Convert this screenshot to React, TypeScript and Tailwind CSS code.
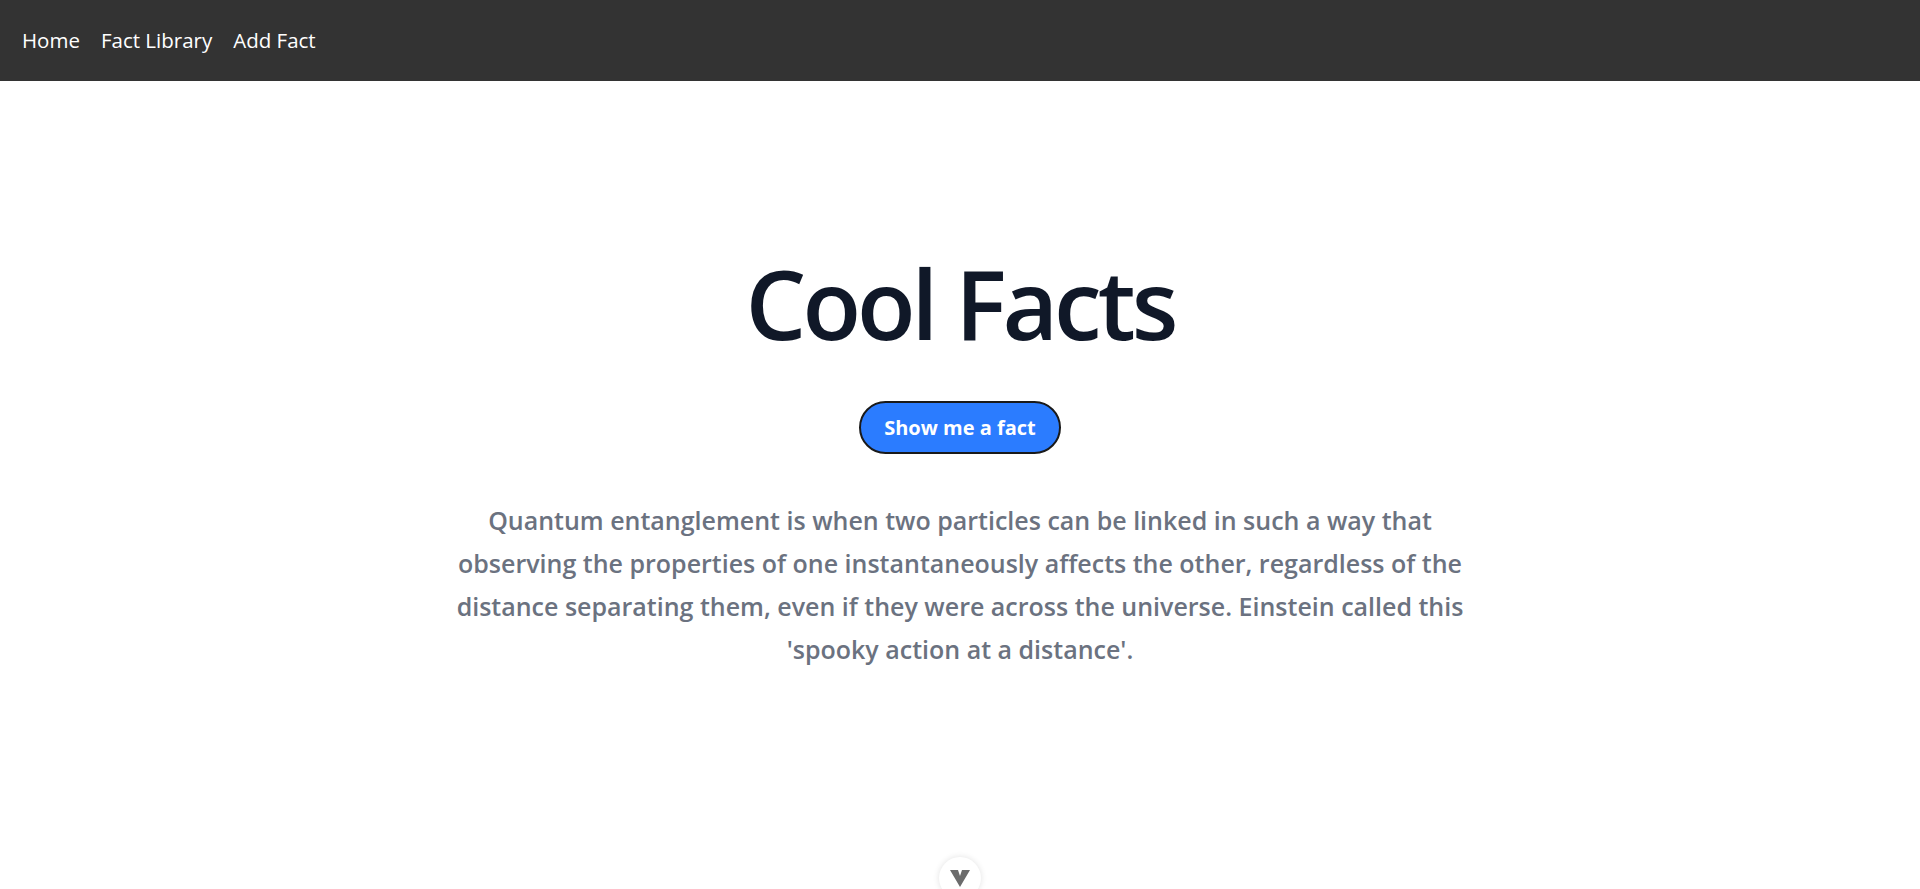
import React, { useState } from 'react';

const facts = [
    "Quantum entanglement is when two particles can be linked in such a way that observing the properties of one instantaneously affects the other, regardless of the distance separating them, even if they were across the universe. Einstein called this 'spooky action at a distance'.",
];

const App: React.FC = () => {
    const [index, setIndex] = useState(0);

    return (
        <div className="min-h-screen bg-white font-['Open_Sans',sans-serif]">
            <nav className="h-[81px] bg-[#333333] flex items-center gap-[21px] px-[22px] text-[20.5px] text-white">
                <a href="#">Home</a>
                <a href="#">Fact Library</a>
                <a href="#">Add Fact</a>
            </nav>

            <main className="relative h-[808px] overflow-hidden flex flex-col items-center pt-[174px]">
                <h1 className="text-[96px] leading-none font-semibold text-gray-900 tracking-[-4px]">Cool Facts</h1>
                <button
                    onClick={() => setIndex((index + 1) % facts.length)}
                    className="mt-[50px] h-[53px] px-[23px] rounded-full border-2 border-[#1a1a1a] bg-[#2b7cff] text-white text-[20px] font-bold"
                >
                    Show me a fact
                </button>
                <p className="mt-[45px] w-[1020px] text-center text-[25px] leading-[43px] font-semibold text-[#6b7280]">
                    {facts[index]}
                </p>

                <div className="absolute left-1/2 -translate-x-1/2 top-[776px] w-[42px] h-[42px] rounded-full bg-white shadow-[0_0_6px_rgba(0,0,0,0.12)] flex items-center justify-center">
                    <svg width="20" height="17" viewBox="0 0 20 17">
                        <path d="M0 0 L8 0 L10 6 L12 0 L20 0 L10 17 Z" fill="#6b6b6b" />
                    </svg>
                </div>
            </main>
        </div>
    );
};

export default App;
